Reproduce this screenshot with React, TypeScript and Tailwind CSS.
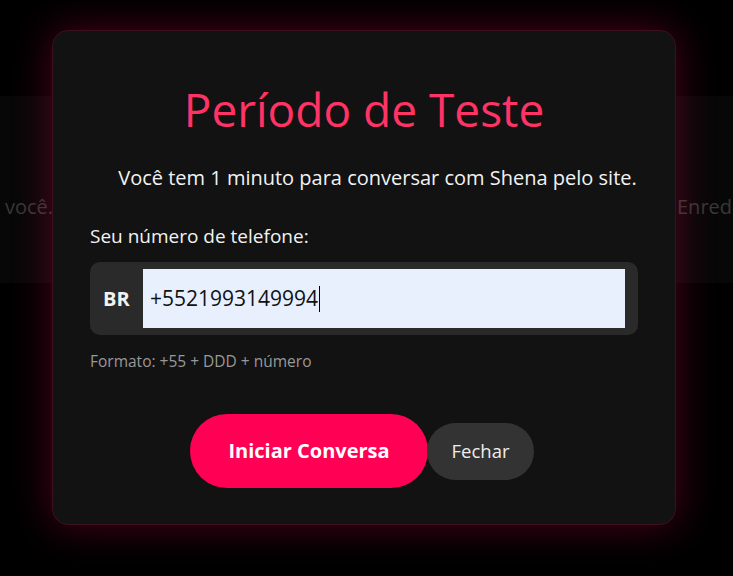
import React from 'react';

export default function App() {
  const phone = '+5521993149994';

  return (
    <div className="relative h-[576px] w-full overflow-hidden bg-black font-['Open_Sans','Noto_Sans',sans-serif]">
      {/* Page content behind the overlay */}
      <div className="mt-[96px] flex h-[187px] items-start justify-between bg-[#070707] pt-[97px] text-[20px] leading-[28px] text-[#383838]">
        <span className="pl-[5px]">você.</span>
        <span className="w-[56px] overflow-hidden whitespace-nowrap">Enredo</span>
      </div>

      {/* Trial modal */}
      <div className="absolute inset-0 flex justify-start pt-[30px] pl-[52px]">
        <div className="h-[495px] w-[624px] rounded-[16px] border border-[#3d0f20] bg-[#121212] px-[37px] pt-[46px] shadow-[0_0_40px_rgba(255,0,85,0.3)]">
          <h1 className="text-center text-[46px] font-normal leading-[64px] text-[#ff3366]">
            Período de Teste
          </h1>

          <p className="mt-[23px] pl-[27px] text-center text-[20px] leading-[28px] text-[#f2f2f2]">
            Você tem 1 minuto para conversar com Shena pelo site.
          </p>

          <label className="mt-[31px] block text-[19px] leading-[26px] text-[#f2f2f2]">
            Seu número de telefone:
          </label>

          <div className="mt-[13px] flex h-[73px] items-center rounded-[10px] bg-[#2a2a2a] py-[7px] pr-[13px] pl-[13px]">
            <span className="w-[40px] text-[20px] font-bold text-[#f2f2f2]">BR</span>
            <div className="flex h-[59px] flex-1 items-center bg-[#e8f0fe] px-[7px] text-[21px] text-[#111]">
              <span>{phone}</span>
              <span className="ml-[1px] h-[26px] w-[1px] bg-black" />
            </div>
          </div>

          <p className="mt-[15px] text-[15.5px] leading-[22px] text-[#999]">Formato: +55 + DDD + número</p>

          <div className="mt-[42px] flex items-center justify-center pr-[4px]">
            <button className="h-[74px] w-[238px] rounded-full bg-[#ff0055] text-[20px] font-bold text-white">
              Iniciar Conversa
            </button>
            <button className="-ml-[1px] h-[57px] w-[107px] rounded-full bg-[#333] text-[18.5px] text-[#eee]">
              Fechar
            </button>
          </div>
        </div>
      </div>
    </div>
  );
}
